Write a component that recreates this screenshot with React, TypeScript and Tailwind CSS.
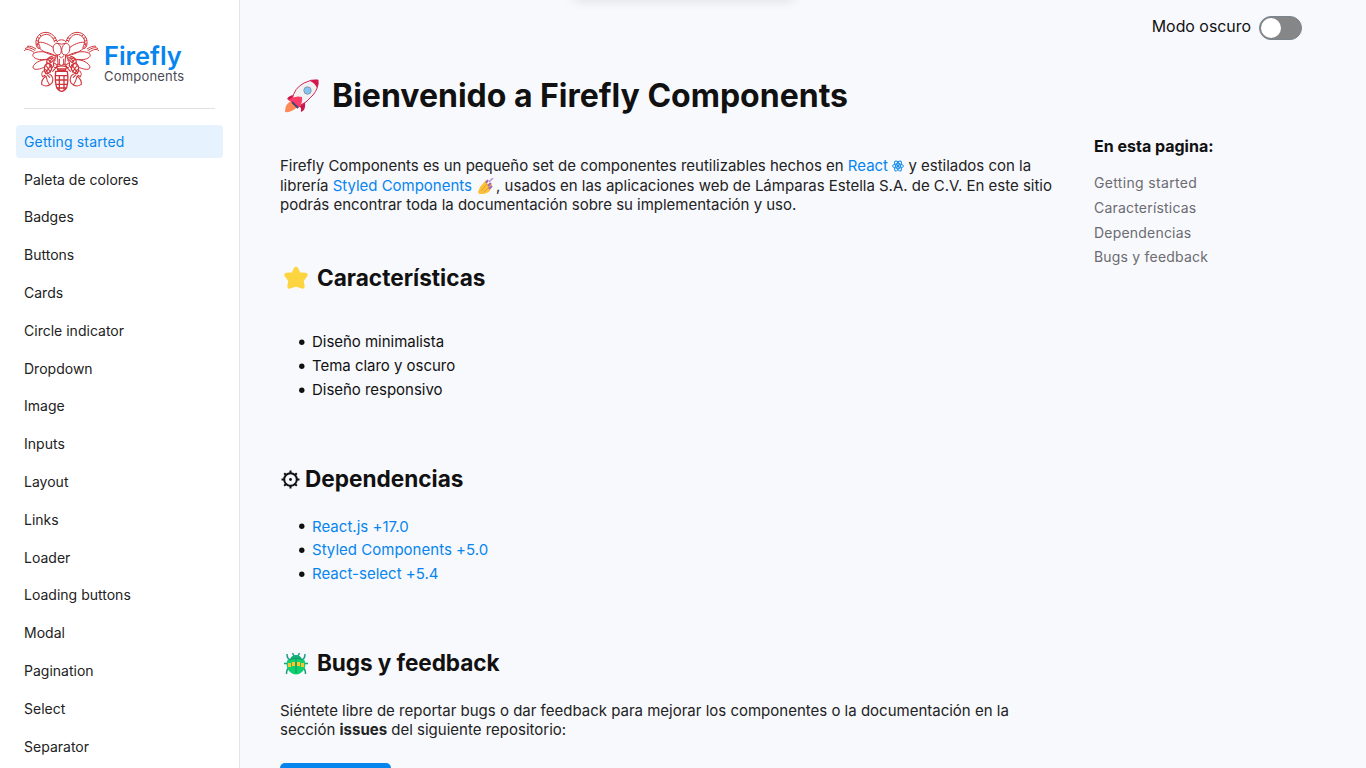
import React from "react";

const navItems = [
  "Getting started",
  "Paleta de colores",
  "Badges",
  "Buttons",
  "Cards",
  "Circle indicator",
  "Dropdown",
  "Image",
  "Inputs",
  "Layout",
  "Links",
  "Loader",
  "Loading buttons",
  "Modal",
  "Pagination",
  "Select",
  "Separator",
];

const tocItems = ["Getting started", "Características", "Dependencias", "Bugs y feedback"];
const features = ["Diseño minimalista", "Tema claro y oscuro", "Diseño responsivo"];
const dependencies = ["React.js +17.0", "Styled Components +5.0", "React-select +5.4"];

function WingSide() {
  return (
    <g>
      <path d="M123 52C118 36 106 25 90 24C72 24 58 38 60 58C61 68 65 73 70 73C75 72 70 64 68 58C64 42 76 31 91 30C104 31 112 41 116 54" />
      <path d="M60 48L67 51M61 59L69 60M64 39L71 43M71 31L76 36M112 42L119 40M115 50L122 47" />
      <path d="M113 71C102 61 82 52 68 54C57 58 68 73 86 83C100 91 114 93 125 95" />
      <path d="M117 94C98 82 69 78 53 87C45 94 56 106 77 106C96 106 110 101 122 96" />
      <path d="M92 106C73 106 54 116 51 128C51 138 67 136 82 130C87 127 91 124 94 119" />
      <path d="M24 80C30 72 41 75 54 84M27 73C35 67 46 71 58 79M33 66C42 64 51 68 60 74" />
      <path strokeWidth="3.6" d="M110 96C99 98 92 105 92 114C94 120 104 117 112 108L121 99M113 100L99 112M96 105L106 115" />
      <path strokeWidth="3.6" d="M94 116C84 123 82 136 89 147C98 150 108 139 108 128C107 121 101 117 94 116Z" />
      <path strokeWidth="3.4" d="M91 125L104 144M88 134L98 149M106 121L88 146M99 119L107 132" />
      <path strokeWidth="3.2" d="M83 139C77 144 76 152 80 157L88 152M90 155C82 161 76 171 77 180C87 187 99 185 107 177C112 170 111 161 106 153L100 149M93 151L102 160M90 155C92 167 96 176 101 182" />
      <path strokeWidth="3.4" d="M119 106C111 112 109 123 118 132L127 119M113 114L124 123M118 132L109 142M115 123L105 132" />
    </g>
  );
}

function FireflyLogo() {
  return (
    <svg className="h-[62px] w-[75px] shrink-0" viewBox="24 20 225 186" fill="none" stroke="#d0343a" strokeWidth="3" strokeLinejoin="round">
      <WingSide />
      <g transform="matrix(-1 0 0 1 273 0)">
        <WingSide />
      </g>
      <path d="M123 54C126 44 147 44 150 54M124 57C114 57 110 67 112 77C114 88 123 95 132 90C138 84 138 64 124 57Z" />
      <path d="M149 57C159 57 163 67 161 77C159 88 150 95 141 90C135 84 135 64 149 57ZM124 57Q136 62 149 57" />
      <path d="M124 92L126 119Q136 127 147 119L149 92M129 94L136 101L144 94M130 103V119M143 103V119" />
      <path strokeWidth="4" d="M122 128Q137 121 152 128L148 138H126ZM119 141H154Q158 170 152 190Q137 212 122 190Q116 170 119 141Z" />
      <path strokeWidth="4" d="M124 134H149M119 154H154M118 167H155M119 180H154M122 191H151M130 154V196M144 154V196" />
    </svg>
  );
}

function Rocket() {
  return (
    <svg className="h-[34px] w-[36px]" viewBox="0 0 36 34">
      <path d="M8 22Q1 24 1 33Q8 34 14 27" fill="#ff8a58" />
      <path d="M11 16Q5 16 3 20L9 23L17 29L17 33Q22 31 21 24" fill="#c9184a" />
      <path d="M8 21Q10 9 20 4Q27 0 34 1Q35 9 29 16Q23 24 13 28Z" fill="#f1f0f2" stroke="#d42858" strokeWidth="1" />
      <path d="M26 2Q30 0 34 1Q35 5 33 9Q31 4 26 2Z" fill="#d5164c" />
      <path d="M4 21Q11 16 18 18Q19 25 14 29Q10 24 4 21Z" fill="#fb3c68" />
      <path d="M8 23L14 29" stroke="#4b4172" strokeWidth="2" />
      <circle cx="23.5" cy="11.5" r="3.7" fill="#82c4f4" stroke="#8b99a7" />
    </svg>
  );
}

function Star() {
  return (
    <svg className="h-6 w-6" viewBox="0 0 24 24">
      <path d="M12 3L15 8.5L21.5 9L17.4 14.5L18.5 20.5L12 18.5L5.5 20.5L6.6 14.5L2.5 9L9 8.5Z" fill="#fdd541" stroke="#fdd541" strokeWidth="4.4" strokeLinejoin="round" />
    </svg>
  );
}

function Gear() {
  return (
    <svg className="h-[19px] w-[19px]" viewBox="-9.5 -9.5 19 19" fill="none" stroke="#111">
      <circle r="6.3" strokeWidth="2" />
      <circle r="1.4" fill="#111" stroke="none" />
      <path strokeWidth="2" d="M0-6V-9M0 6V9M-6 0H-9M6 0H9M4.2-4.2L6.3-6.3M-4.2-4.2L-6.3-6.3M4.2 4.2L6.3 6.3M-4.2 4.2L-6.3 6.3" />
    </svg>
  );
}

function Beetle() {
  return (
    <svg className="h-[23px] w-[24px]" viewBox="0 0 24 23">
      <path d="M10 4L8.5 1M14 4L15.5 1M6.5 8Q3 7 3 2M17.5 8Q21 7 21 2M4 11.5H0M20 11.5H24M5 16Q2.5 17 2.5 22M19 16Q21.5 17 21.5 22" fill="none" stroke="#1f9a86" strokeWidth="1.5" />
      <path d="M6 8Q7 3 12 3Q17 3 18 8Z" fill="#14b078" />
      <path d="M3.5 8Q12 4 20.5 8Q23 15 18 20Q12 25 6 20Q1 15 3.5 8Z" fill="#0fd16e" />
      <path d="M4 11H7V15H4ZM8 10H11V14H8ZM13 10H16V14H13ZM17 11H20V15H17Z" fill="#ffc32b" />
      <path d="M5 7.5Q12 5 19 7.5M12 7V21" fill="none" stroke="#128168" strokeWidth="0.8" />
    </svg>
  );
}

function NailPolish() {
  return (
    <svg className="mx-[2px] inline-block h-4 w-4 align-[-3px]" viewBox="0 0 16 16">
      <path d="M0 14L2 9L8 2L10 3L9 6L13 5L14 7L12 9L13 10L11 14L6 16H1Z" fill="#fcc13a" />
      <path d="M3 13L9 6M6 14L11 9" stroke="#e59c32" />
      <path d="M8 5L10 2M10 8L13 5M11 11L14 8" stroke="#9c68bd" strokeWidth="2" />
      <path d="M11 4L15 0" stroke="#bb94cf" strokeWidth="1.5" />
    </svg>
  );
}

function Atom() {
  return (
    <svg className="inline-block h-[12px] w-[12px] align-[-1px]" viewBox="-6 -6 12 12" fill="none" stroke="#0785ee" strokeWidth="0.9">
      <ellipse rx="5.5" ry="2.2" />
      <ellipse rx="5.5" ry="2.2" transform="rotate(60)" />
      <ellipse rx="5.5" ry="2.2" transform="rotate(120)" />
      <circle r="1" fill="#0785ee" />
    </svg>
  );
}

function Bullet() {
  return (
    <svg className="mr-[7px] size-[6px] shrink-0 overflow-visible" viewBox="0 0 6 6">
      <circle cx="2.8" cy="3.2" r="2.7" fill="#111" />
    </svg>
  );
}

export default function App() {
  return (
    <div className="relative flex h-screen overflow-hidden bg-[#f8f9fd] font-['Inter',sans-serif] text-[#111]">
      <aside className="flex w-60 shrink-0 flex-col border-r border-[#e2e4e8] bg-white px-4 pt-[31px]">
        <div className="ml-2 mr-2 flex h-[78px] shrink-0 items-start gap-[5px] border-b border-[#e2e2e2]">
          <FireflyLogo />
          <div className="pt-[10px]">
            <div className="text-[25.4px] font-semibold leading-[29px] text-[#0785ee]">Firefly</div>
            <div className="-mt-[2px] text-[13px] leading-4 tracking-[0.2px] text-[#4b4b55]">Components</div>
          </div>
        </div>
        <nav className="mt-[15.85px] flex flex-col gap-[4.5px]">
          {navItems.map((item, i) => (
            <a key={item} className={i === 0 ? "h-[33.3px] w-[207px] shrink-0 rounded bg-[#e6f3fe] px-2 text-[14px] leading-[33px] tracking-[0.15px] text-[#0785ee]" : "h-[33.3px] w-[207px] shrink-0 px-2 text-[14px] leading-[33px] tracking-[0.01px] text-[#222]"}>
              {item}
            </a>
          ))}
        </nav>
      </aside>

      <main className="w-[780px] shrink-0 pl-10 pt-[76px]">
        <h1 className="flex h-10 items-center whitespace-nowrap pl-1 text-[32px] font-bold">
          <Rocket />
          <span className="ml-3">Bienvenido a Firefly Components</span>
        </h1>
        <p className="mt-10 whitespace-nowrap text-[15px] leading-[19.5px] tracking-[-0.015px] text-[#222]">
          Firefly Components es un pequeño set de componentes reutilizables hechos en <a className="text-[#0785ee]">React <Atom /></a> y estilados con la<br />
          librería <a className="text-[#0785ee]">Styled Components <NailPolish /></a>, usados en las aplicaciones web de Lámparas Estella S.A. de C.V. En este sitio<br />
          podrás encontrar toda la documentación sobre su implementación y uso.
        </p>

        <h2 className="mt-[49px] flex h-[29px] items-center pl-1 text-[22.6px] font-bold">
          <Star />
          <span className="ml-[9px]">Características</span>
        </h2>
        <ul className="mt-[37px] pl-[19px] text-[15px] leading-6 tracking-[-0.03px]">
          {features.map((f) => <li key={f} className="flex items-center"><Bullet />{f}</li>)}
        </ul>

        <h2 className="mt-[63px] flex h-[29px] items-center pl-px text-[22.6px] font-bold">
          <Gear />
          <span className="ml-[5px]">Dependencias</span>
        </h2>
        <ul className="mt-[21px] pl-[19px] text-[15px] leading-[23.7px] tracking-[0.02px]">
          {dependencies.map((d) => <li key={d} className="flex items-center"><Bullet /><a className="text-[#0785ee]">{d}</a></li>)}
        </ul>

        <h2 className="mt-[63px] flex h-[29px] items-center pl-1 text-[22.6px] font-bold tracking-[-0.1px]">
          <Beetle />
          <span className="ml-[9px]">Bugs y feedback</span>
        </h2>
        <p className="mt-[23px] whitespace-nowrap text-[15px] leading-[19.5px] text-[#222]">
          Siéntete libre de reportar bugs o dar feedback para mejorar los componentes o la documentación en la<br />
          sección <b>issues</b> del siguiente repositorio:
        </p>
        <div className="mt-[23px] h-9 w-[111px] rounded-[5px] bg-[#0785ee]" />
      </main>

      <div className="ml-[74px] w-[208px] shrink-0 pt-4">
        <div className="flex h-6 items-center justify-end gap-2">
          <span className="whitespace-nowrap pb-[3px] text-[15.9px]">Modo oscuro</span>
          <div className="flex h-6 w-[43px] items-center rounded-full border border-[#7b858e] bg-[#858688] px-px">
            <div className="h-5 w-5 rounded-full bg-white" />
          </div>
        </div>
        <div className="mt-[96px] text-[16px] font-bold leading-5">En esta pagina:</div>
        <div className="mt-[15px] flex flex-col text-[14px] leading-[24.8px] tracking-[0.2px] text-[#6b6b70]">
          {tocItems.map((t, i) => <a key={t} className={i === 0 ? "tracking-[0.33px]" : ""}>{t}</a>)}
        </div>
      </div>
      <div className="absolute -top-10 left-[574px] h-10 w-[220px] shadow-[0_0_12px_rgba(0,0,0,0.12)]" />
    </div>
  );
}
